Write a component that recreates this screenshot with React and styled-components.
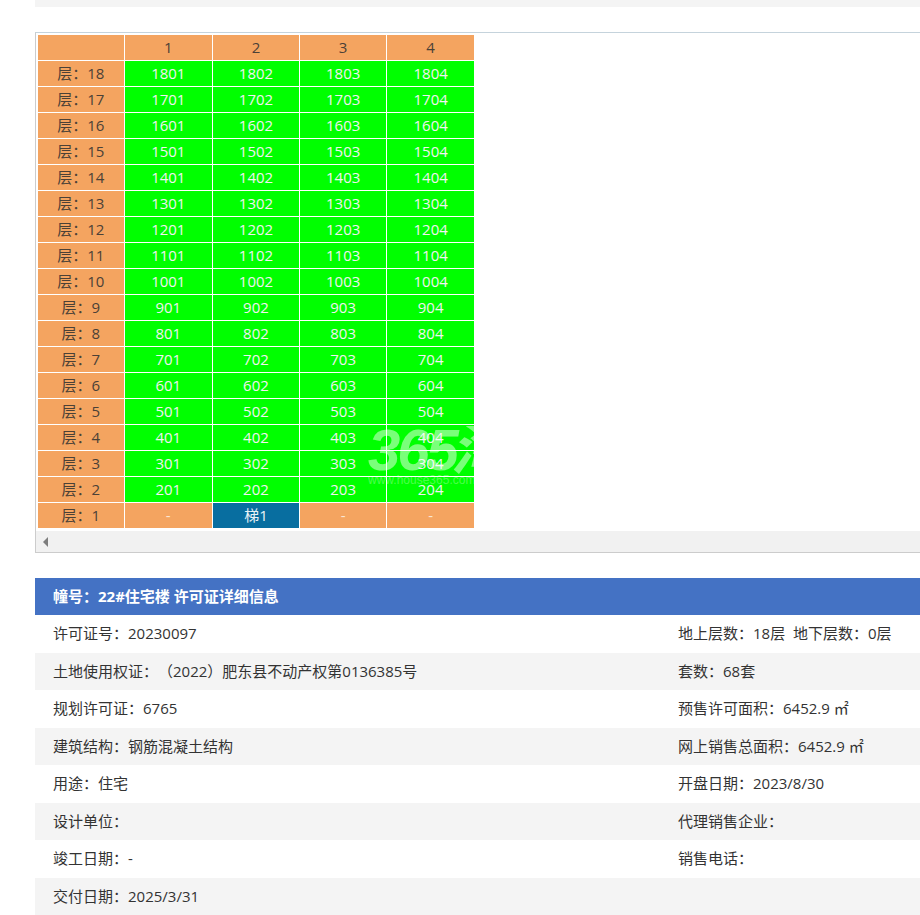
import React from "react";
import styled, { createGlobalStyle } from "styled-components";

const GlobalStyle = createGlobalStyle`
  html, body {
    margin: 0;
    padding: 0;
    background: #fff;
    overflow: hidden;
  }
  body {
    font-family: "Open Sans", "Noto Sans CJK SC", sans-serif;
    font-size: 15px;
    color: #333;
    text-spacing-trim: space-all;
  }
`;

const floors = [18, 17, 16, 15, 14, 13, 12, 11, 10, 9, 8, 7, 6, 5, 4, 3, 2];
const units = ["01", "02", "03", "04"];

const details = [
  ["许可证号：20230097", "地上层数：18层  地下层数：0层"],
  ["土地使用权证：（2022）肥东县不动产权第0136385号", "套数：68套"],
  ["规划许可证：6765", "预售许可面积：6452.9 ㎡"],
  ["建筑结构：钢筋混凝土结构", "网上销售总面积：6452.9 ㎡"],
  ["用途：住宅", "开盘日期：2023/8/30"],
  ["设计单位：", "代理销售企业："],
  ["竣工日期：-", "销售电话："],
  ["交付日期：2025/3/31", ""],
];

export default function App() {
  return (
    <Page>
      <GlobalStyle />
      <TopStrip />
      <TableBox>
        <TableArea>
          <FloorTable>
            <colgroup>
              <col width="86" />
              <col width="88" />
              <col width="87" />
              <col width="87" />
              <col width="87" />
            </colgroup>
            <tbody>
              <tr>
                <HeadCell />
                <HeadCell>1</HeadCell>
                <HeadCell>2</HeadCell>
                <HeadCell>3</HeadCell>
                <HeadCell>4</HeadCell>
              </tr>
              {floors.map((floor) => (
                <tr key={floor}>
                  <HeadCell>层：{floor}</HeadCell>
                  {units.map((unit) => (
                    <RoomCell key={unit}>
                      {floor}
                      {unit}
                    </RoomCell>
                  ))}
                </tr>
              ))}
              <tr>
                <HeadCell>层：1</HeadCell>
                <EmptyCell>-</EmptyCell>
                <LiftCell>梯1</LiftCell>
                <EmptyCell>-</EmptyCell>
                <EmptyCell>-</EmptyCell>
              </tr>
            </tbody>
          </FloorTable>
          <Watermark>
            <WatermarkLogo>
              365<WatermarkHan>淘</WatermarkHan>
            </WatermarkLogo>
            <WatermarkUrl>www.house365.com</WatermarkUrl>
          </Watermark>
        </TableArea>
        <ScrollBar>
          <ScrollArrow />
        </ScrollBar>
      </TableBox>
      <DetailPanel>
        <DetailTitle>幢号：22#住宅楼 许可证详细信息</DetailTitle>
        {details.map(([left, right], index) => (
          <DetailRow key={left} $striped={index % 2 === 1}>
            <LeftText>{left}</LeftText>
            <RightText>{right}</RightText>
          </DetailRow>
        ))}
      </DetailPanel>
    </Page>
  );
}

const Page = styled.div`
  width: 920px;
  height: 915px;
  overflow: hidden;
  padding-left: 35px;
  box-sizing: border-box;
`;

const TopStrip = styled.div`
  height: 7px;
  background: #f4f4f4;
  margin-bottom: 25px;
`;

const TableBox = styled.div`
  width: 900px;
  height: 521px;
  box-sizing: border-box;
  border: 1px solid #cccccc;
  border-top-color: #c5d3dc;
  border-right: none;
  display: flex;
  flex-direction: column;
`;

const TableArea = styled.div`
  position: relative;
  flex: 1;
  padding: 1px 0 0 2px;
`;

const FloorTable = styled.table`
  border-collapse: collapse;
  table-layout: fixed;
  width: 436px;
  text-align: center;
`;

const Cell = styled.td`
  height: 25px;
  padding: 0;
  border: 1px solid #fff;
  line-height: 24px;
  vertical-align: top;
  font-size: 15px;
  &:last-child {
    border-right: none;
  }
`;

const HeadCell = styled(Cell)`
  background: #f4a460;
  color: #4b4137;
  &:first-child {
    border-left: none;
  }
`;

const RoomCell = styled(Cell)`
  background: #00ff00;
  color: #f2f2f2;
`;

const EmptyCell = styled(Cell)`
  background: #f4a460;
  color: #fbe6d3;
`;

const LiftCell = styled(Cell)`
  background: #086ea0;
  color: #e8f2f6;
`;

const Watermark = styled.div`
  position: absolute;
  left: 332px;
  top: 393px;
  width: 106px;
  height: 62px;
  overflow: hidden;
  pointer-events: none;
  color: rgba(255, 255, 255, 0.48);
  white-space: nowrap;
`;

const WatermarkLogo = styled.div`
  font-family: "Liberation Sans", "Noto Sans CJK SC", sans-serif;
  font-size: 58px;
  font-weight: 700;
  font-style: italic;
  line-height: 48px;
  letter-spacing: -3px;
`;

const WatermarkHan = styled.span`
  margin-left: -5px;
`;

const WatermarkUrl = styled.div`
  font-family: "Liberation Sans", sans-serif;
  font-size: 12px;
  line-height: 13px;
  color: rgba(255, 255, 255, 0.3);
`;

const ScrollBar = styled.div`
  height: 21px;
  background: #f1f1f1;
  display: flex;
  align-items: center;
  padding-left: 7px;
`;

const ScrollArrow = styled.div`
  width: 0;
  height: 0;
  border-top: 5px solid transparent;
  border-bottom: 5px solid transparent;
  border-right: 5px solid #7d7d7d;
`;

const DetailPanel = styled.div`
  width: 900px;
  margin-top: 25px;
`;

const DetailTitle = styled.div`
  height: 37px;
  line-height: 36px;
  padding-left: 18px;
  background: #4472c4;
  color: #fff;
  font-weight: 700;
  font-size: 15px;
`;

const DetailRow = styled.div`
  height: 37.5px;
  line-height: 36px;
  display: flex;
  align-items: flex-start;
  background: ${({ $striped }) => ($striped ? "#f4f4f4" : "#fff")};
  padding-left: 18px;
  white-space: pre;
`;

const LeftText = styled.span`
  width: 625px;
`;

const RightText = styled.span`
  flex: 1;
`;
